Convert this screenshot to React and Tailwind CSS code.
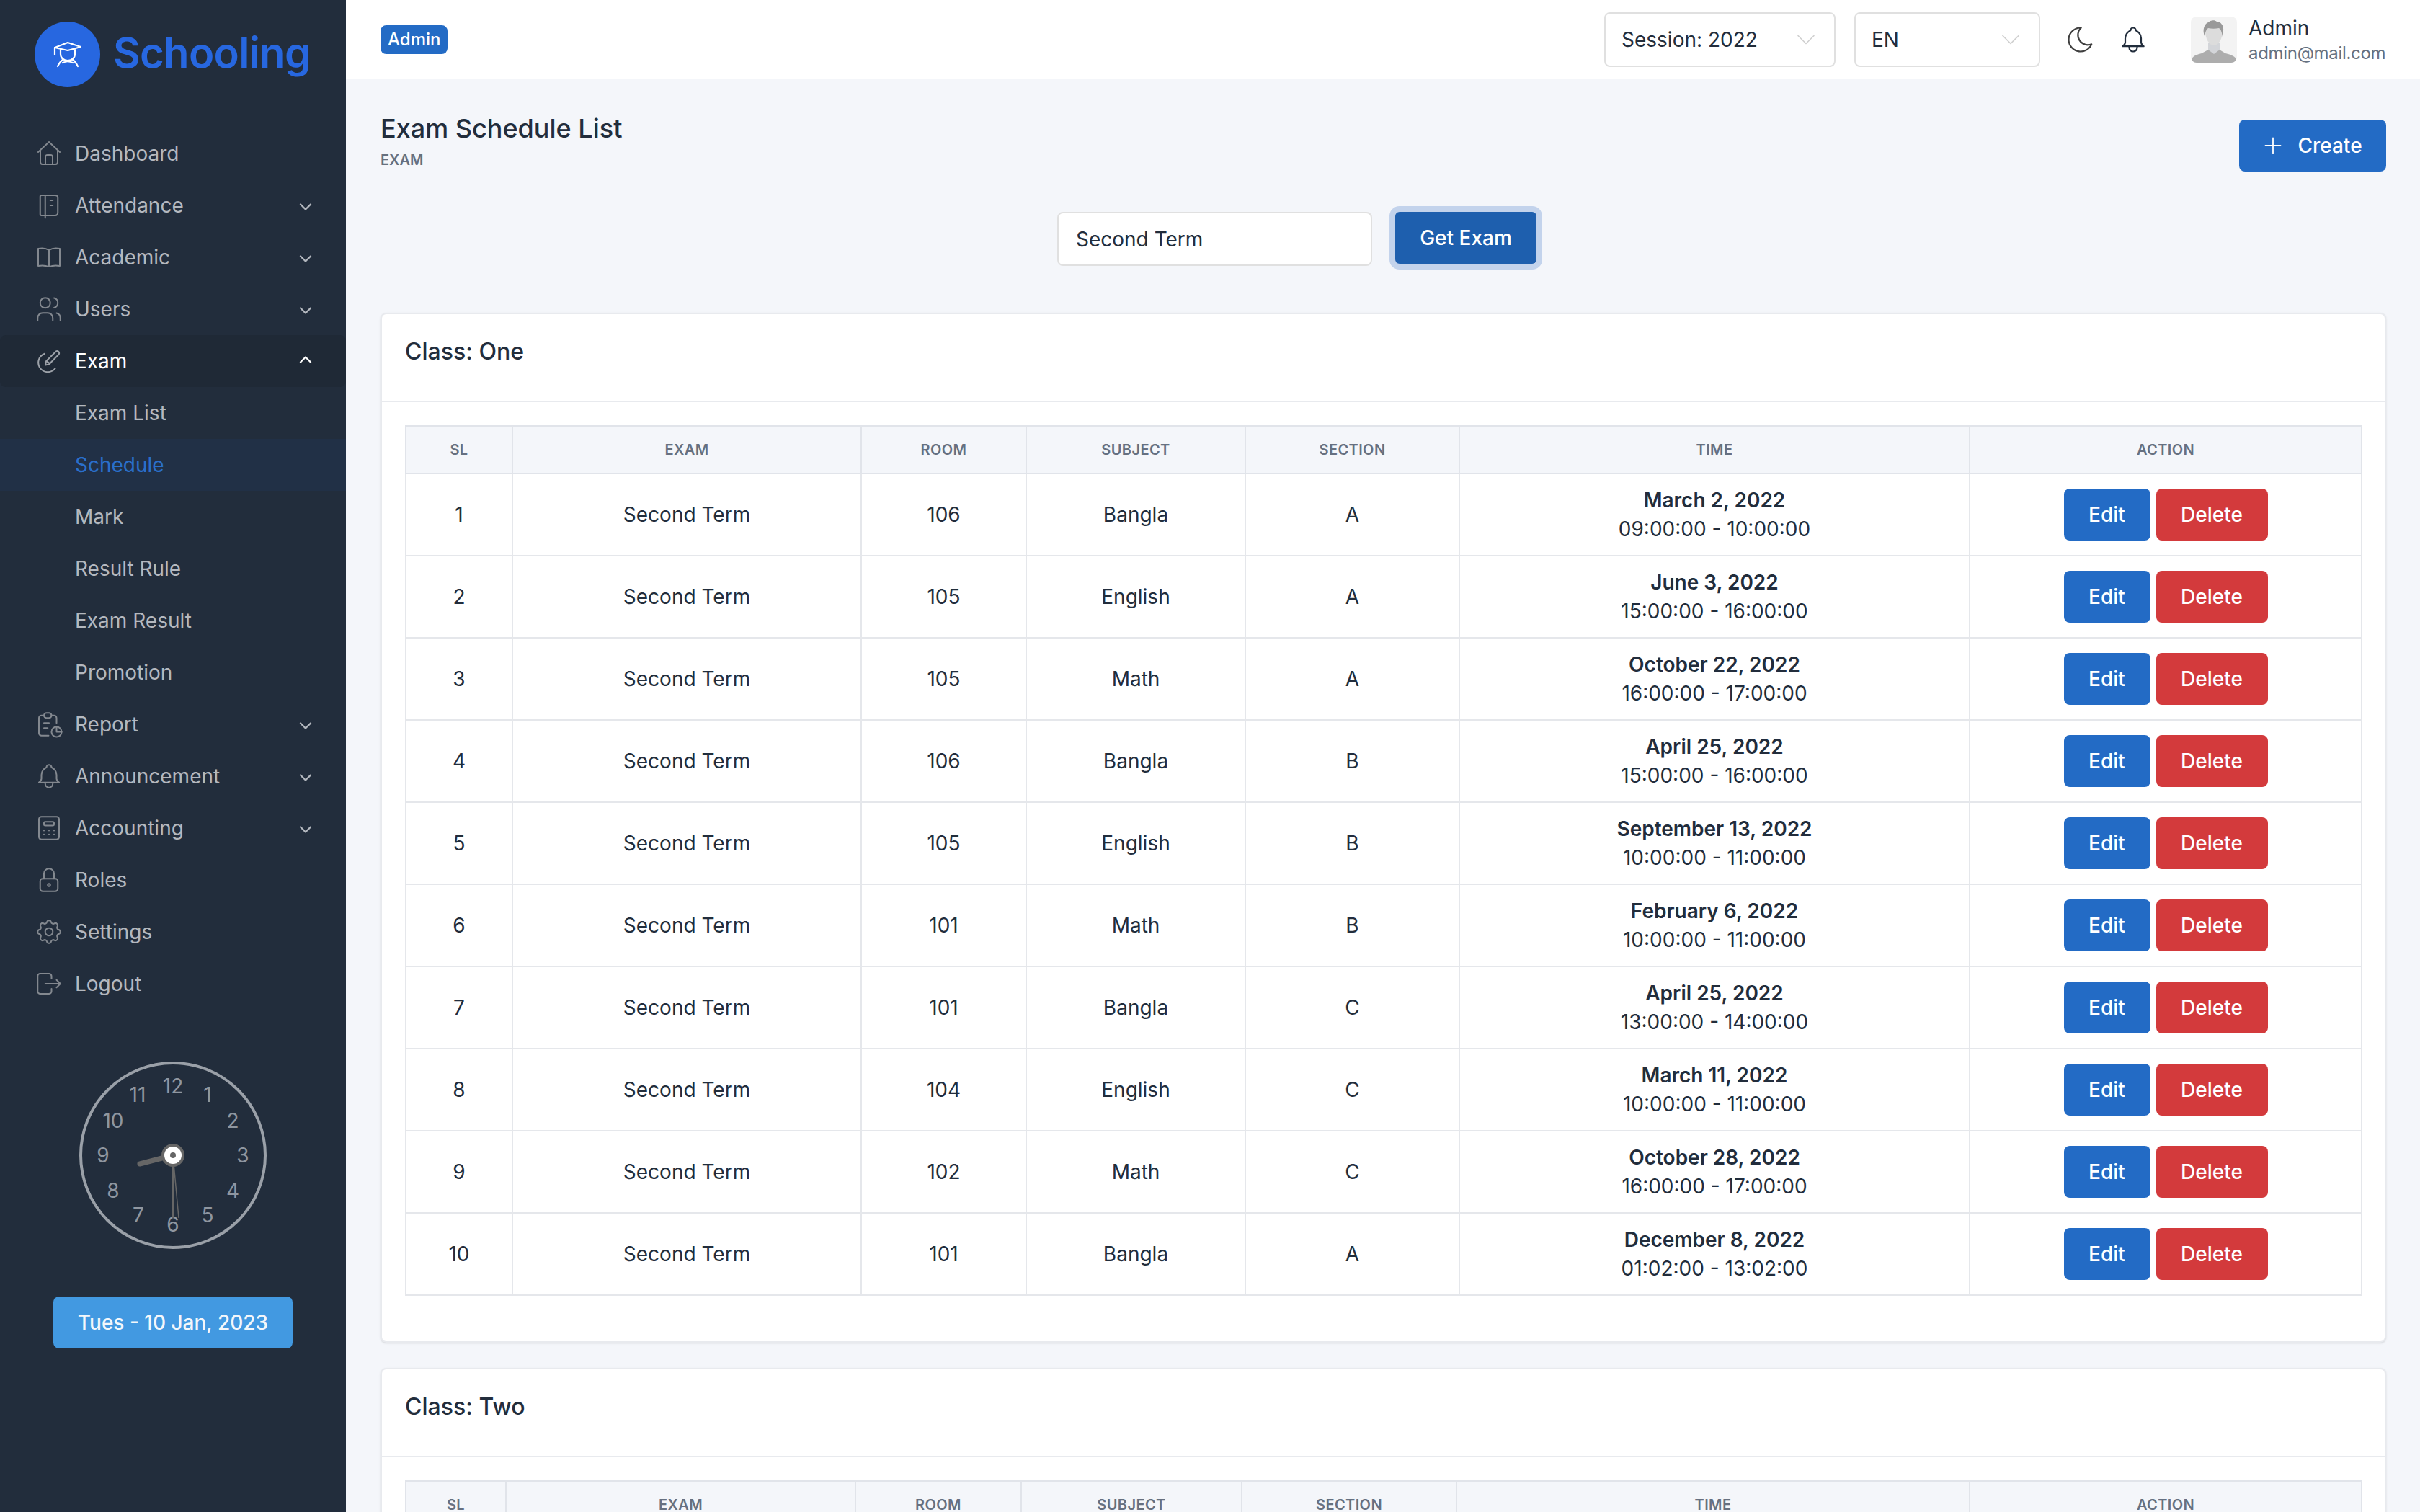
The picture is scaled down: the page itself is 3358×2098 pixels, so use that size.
import {
  TbBell,
  TbCalculator,
  TbChevronDown,
  TbChevronUp,
  TbLock,
  TbLogout,
  TbMoon,
  TbNotebook,
  TbPlus,
  TbReport,
  TbSettings,
  TbUsers,
} from "react-icons/tb";

const rows = [
  [1, 106, "Bangla", "A", "March 2, 2022", "09:00:00 - 10:00:00"],
  [2, 105, "English", "A", "June 3, 2022", "15:00:00 - 16:00:00"],
  [3, 105, "Math", "A", "October 22, 2022", "16:00:00 - 17:00:00"],
  [4, 106, "Bangla", "B", "April 25, 2022", "15:00:00 - 16:00:00"],
  [5, 105, "English", "B", "September 13, 2022", "10:00:00 - 11:00:00"],
  [6, 101, "Math", "B", "February 6, 2022", "10:00:00 - 11:00:00"],
  [7, 101, "Bangla", "C", "April 25, 2022", "13:00:00 - 14:00:00"],
  [8, 104, "English", "C", "March 11, 2022", "10:00:00 - 11:00:00"],
  [9, 102, "Math", "C", "October 28, 2022", "16:00:00 - 17:00:00"],
  [10, 101, "Bangla", "A", "December 8, 2022", "01:02:00 - 13:02:00"],
];

const headers = ["SL", "EXAM", "ROOM", "SUBJECT", "SECTION", "TIME", "ACTION"];
const clockNumbers = [
  [12, 240, 1507],
  [1, 288, 1519],
  [2, 323, 1555],
  [3, 337, 1603],
  [4, 323, 1652],
  [5, 288, 1686],
  [6, 240, 1699],
  [7, 192, 1686],
  [8, 157, 1652],
  [9, 143, 1603],
  [10, 157, 1555],
  [11, 191, 1519],
];

function HomeIcon() {
  return (
    <svg width="32" height="34" viewBox="0 0 32 34" fill="none" stroke="currentColor" strokeWidth="2" strokeLinecap="round" strokeLinejoin="round">
      <path d="M1 15L16 1l15 14" />
      <path d="M4 13v16a3 3 0 0 0 3 3h18a3 3 0 0 0 3-3V13" />
      <path d="M11 32V22a3 3 0 0 1 3-3h4a3 3 0 0 1 3 3v10" />
    </svg>
  );
}

function BookIcon() {
  return (
    <svg width="32" height="28" viewBox="0 0 32 28" fill="none" stroke="currentColor" strokeWidth="2" strokeLinecap="round" strokeLinejoin="round">
      <path d="M16 4C12 1.500 6 1 1 2v24c5-1 11-.5 15 1.500 4-2 10-2.500 15-1.500V2c-5-1-11-.5-15 2z" />
      <path d="M16 4v23" />
    </svg>
  );
}

function ExamIcon() {
  return (
    <svg width="32" height="32" viewBox="0 0 24 24" fill="none" stroke="#9ca1a8" strokeWidth="1.5" strokeLinecap="round" strokeLinejoin="round">
      <path d="M7.500 4.300A9.800 9.800 0 1 0 18.500 19.500" />
      <path d="M8.200 16.200l.9-4.200L19 2.200a2 2 0 0 1 3 3L12.200 15.200z" />
      <path d="M10 12.500l3 2" />
    </svg>
  );
}

function CapIcon() {
  return (
    <svg width="40" height="38" viewBox="0 0 40 38" fill="none" stroke="#fff" strokeWidth="2.200" strokeLinecap="round" strokeLinejoin="round">
      <path d="M2 9L20 2l18 6-18 5z" />
      <path d="M2 9v10" />
      <path d="M10 12v6c0 5 4 9 10 9s10-4 10-9v-6" />
      <path d="M13 26c-3 2-5 5-7 9" />
      <path d="M27 26c3 2 5 5 7 9" />
      <path d="M13 30c4-2 10-2 14 0" />
    </svg>
  );
}

function Avatar() {
  return (
    <svg width="64" height="64" viewBox="0 0 64 64" className="rounded-lg bg-[#f3f3f3]">
      <path d="M1 60c1-5 6-7 14-9l11-6h12l10 6c8 2 14 4 15 9 0 2-2 4-5 4H6c-3 0-5-2-5-4z" fill="#adadad" />
      <path d="M24 36h16v10l-8 6-8-6z" fill="#d3d5d9" />
      <path d="M20 20c0-8 5-11 12-11s12 3 12 11c0 10-5 20-12 20S20 30 20 20z" fill="#dcdcdc" />
      <path d="M19 27c-3-8-1-16 5-19 3-3 9-4 12-1 6 0 10 6 9 13l-1 8c-1-6-2-10-5-12-5 1-10 1-15 0-3 2-4 6-5 11z" fill="#999" />
    </svg>
  );
}

function SideItem({ icon: Icon, label, arrow, active }) {
  return (
    <div className={`flex h-[72px] items-center pl-[47px] pr-[42px] ${active ? "rounded-lg bg-[#1f2936] text-white" : "text-[#b4b8bf]"}`}>
      <div className="flex w-[42px] items-center justify-center text-[#83888f]">
        <Icon size={42} strokeWidth={1.15} />
      </div>
      <span className="ml-[15px] flex-1">{label}</span>
      {arrow === "down" && <TbChevronDown size={28} className="mt-[4px]" />}
      {arrow === "up" && <TbChevronUp size={28} className="-mt-[4px] text-white" />}
    </div>
  );
}

function SubItem({ label, active }) {
  return (
    <div className={`flex h-[72px] items-center pl-[104px] ${active ? "bg-[#213046] text-[#2a6fcb]" : "text-[#b4b8bf]"}`}>
      {label}
    </div>
  );
}

function Sidebar() {
  return (
    <aside className="h-full w-[480px] shrink-0 overflow-hidden bg-[#222d3c] text-[28px]">
      <div className="flex h-[177px] items-start pl-[48px] pt-[30px]">
        <div className="flex h-[91px] w-[91px] items-center justify-center rounded-full bg-[#2767e0]">
          <CapIcon />
        </div>
        <span className="ml-[18px] mt-[5px] text-[58px] font-semibold leading-[76px] tracking-[-0.7px] text-[#2767e0]">Schooling</span>
      </div>

      <nav>
        <SideItem icon={HomeIcon} label="Dashboard" />
        <SideItem icon={TbNotebook} label="Attendance" arrow="down" />
        <SideItem icon={BookIcon} label="Academic" arrow="down" />
        <SideItem icon={TbUsers} label="Users" arrow="down" />
        <SideItem icon={ExamIcon} label="Exam" arrow="up" active />
        <SubItem label="Exam List" />
        <SubItem label="Schedule" active />
        <SubItem label="Mark" />
        <SubItem label="Result Rule" />
        <SubItem label="Exam Result" />
        <SubItem label="Promotion" />
        <SideItem icon={TbReport} label="Report" arrow="down" />
        <SideItem icon={TbBell} label="Announcement" arrow="down" />
        <SideItem icon={TbCalculator} label="Accounting" arrow="down" />
        <SideItem icon={TbLock} label="Roles" />
        <SideItem icon={TbSettings} label="Settings" />
        <SideItem icon={TbLogout} label="Logout" />
      </nav>

      <div className="mt-[72px] flex justify-center">
        <svg width="260" height="260" viewBox="110 1473 260 260" className="block">
          <circle cx="240" cy="1603" r="128" fill="none" stroke="#9aa0a8" strokeWidth="4" />
          {clockNumbers.map(([n, x, y]) => (
            <text key={n} x={x} y={y + 10} textAnchor="middle" fontSize="28" fill="#8f96a0">
              {n}
            </text>
          ))}
          <line x1="240" y1="1603" x2="194" y2="1615" stroke="#666" strokeWidth="7" strokeLinecap="round" />
          <line x1="240" y1="1603" x2="240" y2="1690" stroke="#666" strokeWidth="4" />
          <line x1="240" y1="1603" x2="248" y2="1690" stroke="#666" strokeWidth="1.500" />
          <circle cx="240" cy="1603" r="14" fill="#fff" stroke="#666" strokeWidth="4" />
          <circle cx="240" cy="1603" r="4" fill="#666" />
        </svg>
      </div>

      <div className="ml-[74px] mt-[66px] flex h-[72px] w-[332px] items-center justify-center rounded-lg bg-[#4299e1] font-medium text-[#f3f7fb]">
        Tues - 10 Jan, 2023
      </div>
    </aside>
  );
}

function Select({ label, className }) {
  return (
    <div className={`flex h-[76px] items-center justify-between rounded-lg border-2 border-[#e0e0e0] bg-white pl-[22px] pr-[17px] text-[28px] text-[#222d3c] ${className}`}>
      <span>{label}</span>
      <TbChevronDown size={44} strokeWidth={0.9} className="text-[#d0d0d0]" />
    </div>
  );
}

function Topbar() {
  return (
    <header className="flex h-[110px] shrink-0 items-center bg-white pl-[48px] pr-[47px]">
      <span className="rounded-lg bg-[#236bc5] px-[10px] py-[5px] text-[24px] font-medium leading-[30px] text-white">Admin</span>
      <div className="ml-auto flex items-center">
        <Select label="Session: 2022" className="w-[321px]" />
        <Select label="EN" className="ml-[26px] w-[258px]" />
        <TbMoon size={44} strokeWidth={1.2} className="ml-[34px] text-[#3f3f3f]" />
        <TbBell size={44} strokeWidth={1.2} className="ml-[29px] text-[#222d3c]" />
        <div className="ml-[58px] flex items-center">
          <Avatar />
          <div className="ml-[16px]">
            <div className="text-[28px] leading-[38px] text-[#222d3c]">Admin</div>
            <div className="w-[191px] text-[24px] leading-[32px] tracking-[-0.3px] text-[#667080]">admin@mail.com</div>
          </div>
        </div>
      </div>
    </header>
  );
}

function ScheduleTable({ widths, data }) {
  return (
    <table className="w-[2714px] table-fixed border-collapse text-center text-[28px] text-[#222d3c]">
      <thead>
        <tr className="bg-[#f4f6fa]">
          {headers.map((h, i) => (
            <th key={h} style={{ width: widths[i] }} className="h-[66px] border-2 border-[#e1e4ea] p-0 text-[20px] font-semibold tracking-[0.4px] text-[#667080]">
              {h}
            </th>
          ))}
        </tr>
      </thead>
      <tbody>
        {data.map((r) => (
          <tr key={r[0]}>
            <td className="h-[114px] border-2 border-[#e5e7eb] p-0">{r[0]}</td>
            <td className="border-2 border-[#e5e7eb] p-0">Second Term</td>
            <td className="border-2 border-[#e5e7eb] p-0">{r[1]}</td>
            <td className="border-2 border-[#e5e7eb] p-0">{r[2]}</td>
            <td className="border-2 border-[#e5e7eb] p-0">{r[3]}</td>
            <td className="border-2 border-[#e5e7eb] p-0 leading-[40px]">
              <div className="font-semibold">{r[4]}</div>
              <div>{r[5]}</div>
            </td>
            <td className="border-2 border-[#e5e7eb] p-0">
              <div className="flex justify-center gap-[8px]">
                <button className="h-[72px] w-[120px] rounded-lg bg-[#236bc5] font-medium text-white">Edit</button>
                <button className="h-[72px] w-[155px] rounded-lg bg-[#d33a3c] font-medium text-white">Delete</button>
              </div>
            </td>
          </tr>
        ))}
      </tbody>
    </table>
  );
}

function ClassCard({ title, widths, data, className }) {
  return (
    <section className={`rounded-lg border-2 border-[#e8eaee] bg-white shadow-sm ${className}`}>
      <div className="flex h-[122px] items-center border-b-2 border-[#e8eaee] pl-[32px] pb-[16px] text-[32px] font-medium text-[#222d3c]">
        {title}
      </div>
      <div className="px-[32px] pt-[32px] pb-[63px]">
        <ScheduleTable widths={widths} data={data} />
      </div>
    </section>
  );
}

export default function App() {
  return (
    <div className="flex h-screen overflow-hidden bg-[#f4f6fa] font-['Inter',sans-serif]">
      <Sidebar />
      <div className="flex min-w-0 flex-1 flex-col overflow-hidden">
        <Topbar />
        <main className="pl-[48px] pr-[47px] pt-[46px]">
          <div className="flex items-start justify-between">
            <div>
              <h1 className="text-[36px] font-medium leading-[44px] text-[#222d3c]">Exam Schedule List</h1>
              <p className="mt-[8px] text-[20px] font-semibold leading-[28px] text-[#667080]">EXAM</p>
            </div>
            <button className="mt-[10px] flex h-[72px] w-[204px] items-center justify-center gap-[16px] rounded-lg bg-[#236bc5] pr-[4px] text-[28px] font-medium text-white">
              <TbPlus size={36} strokeWidth={1.2} />
              Create
            </button>
          </div>

          <div className="mb-[65px] mt-[56px] flex items-start justify-center gap-[32px] pr-[240px]">
            <div className="flex h-[75px] w-[437px] items-center rounded-lg border-2 border-[#e0e0e0] bg-white pl-[24px] text-[28px] text-[#222d3c]">
              Second Term
            </div>
            <button className="h-[72px] w-[196px] rounded-md bg-[#1e5fae] text-[28px] font-medium text-white ring-8 ring-[#c3d3ec]">
              Get Exam
            </button>
          </div>

          <ClassCard title="Class: One" widths={[148, 484, 229, 304, 297, 708, 544]} data={rows} />
          <ClassCard title="Class: Two" widths={[139, 485, 230, 306, 298, 712, 544]} data={rows.slice(0, 1)} className="mt-[35px]" />
        </main>
      </div>
    </div>
  );
}
